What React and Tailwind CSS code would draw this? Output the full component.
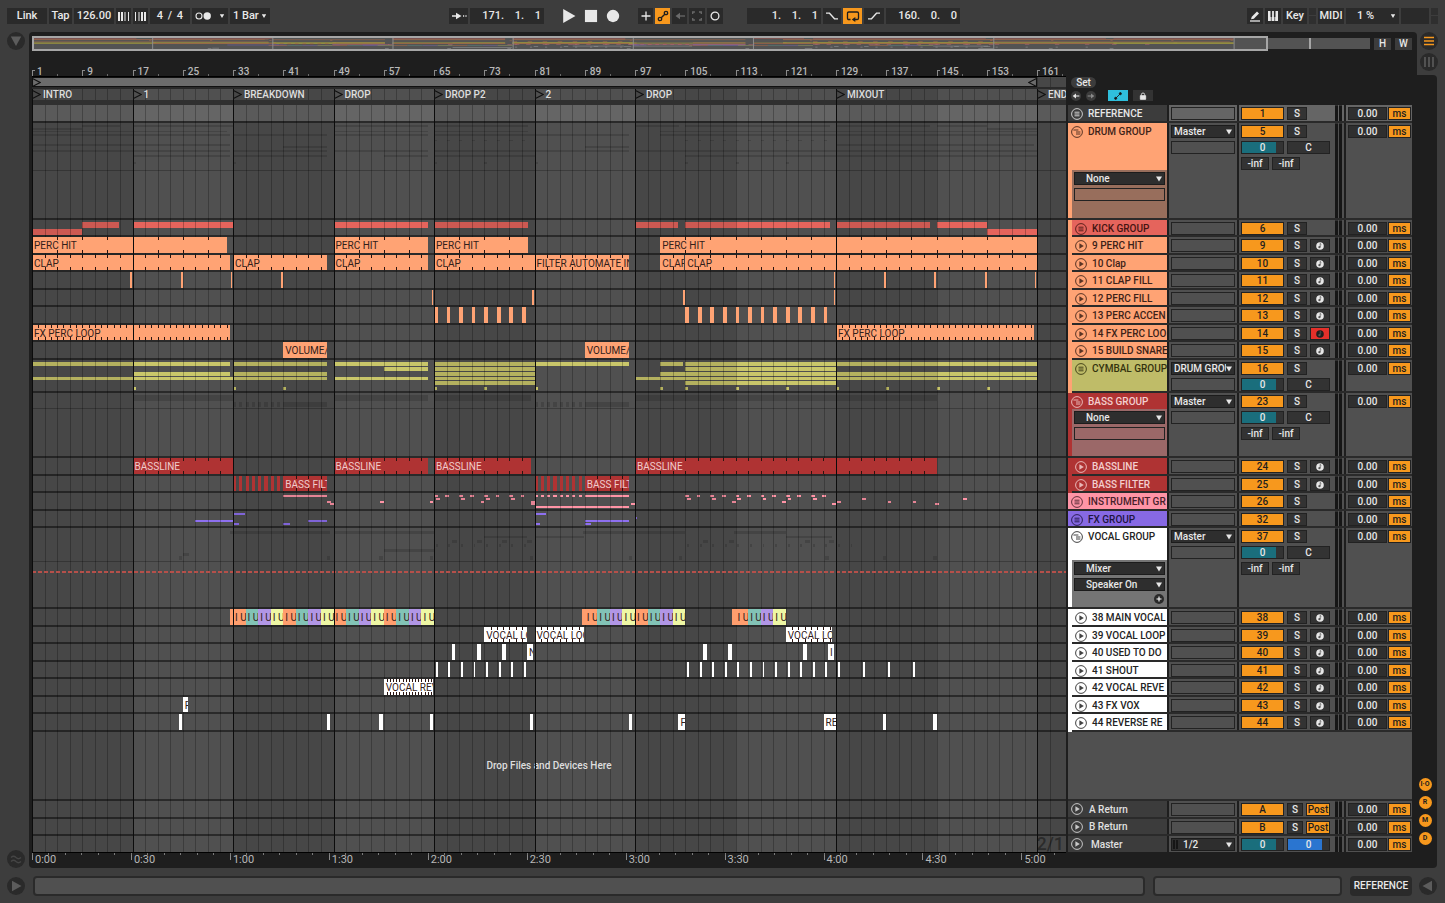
import React from 'react';

const TOTAL_BARS = 164.6;
const left = (bar) => `${((bar - 1) / TOTAL_BARS) * 100}%`;
const width = (bars) => `${(bars / TOTAL_BARS) * 100}%`;

const range = (start, count, step) => Array.from({ length: count }, (_, i) => start + i * step);

// [start bar, end bar, label, colour override]
const marks = (starts, len) => starts.map((s) => [s, s + len]);
// [start bar, end bar, top, height]
const mini = (top, h, spans) => spans.map(([s, e]) => [s, e, top, h]);

const VOCAL_COLORS = ['bg-[#ff9e6e]', 'bg-[#82c3b6]', 'bg-[#b196e6]', 'bg-[#eef7a4]'];
const phrase = (start, count) => [
  [start - 0.5, start, '', VOCAL_COLORS[0]],
  ...range(start, count, 2).map((s, i) => [s, s + 2, 'I U', VOCAL_COLORS[i % 4]]),
];

const ORANGE = 'bg-[#ffa374]';
const RED = 'bg-[#e5645c]';
const YELLOW = 'bg-[#bfbc68]';
const CRIMSON = 'bg-[#af3333]';
const PINK = 'bg-[#ff94a6]';
const PURPLE = 'bg-[#8769e4]';
const GHOST = 'bg-black/15';

const TRACKS = [
  { n: '1', name: 'REFERENCE', kind: 'group', h: 'h-[18px]', bg: 'bg-[#3c3c3c]', fg: 'text-[#e8e8e8]', selected: true },
  {
    n: '5', name: 'DRUM GROUP', kind: 'fold', h: 'h-[97px]', bg: ORANGE, fg: 'text-[#3d2218]', out: 'Master', size: 3,
    body: { h: 'h-[48px]', bg: 'bg-[#986e5c]', choices: ['None', ''] }, rule: 'top-[47px]',
    miniBg: GHOST,
    minis: [
      ...mini(2, 2, [[9, 15], [17, 33], [49, 64], [65, 80], [97, 104], [105, 128], [129, 144], [145, 153]]),
      ...mini(5, 2, [[1, 9], [153, 161]]),
      ...mini(8, 1, [[1, 32], [49, 64], [65, 80], [101, 161]]),
      ...mini(11, 2, [[1, 32.5], [33, 48], [49, 64], [65, 96], [101, 161]]),
      ...mini(17, 1, marks([...range(65, 8, 2), ...range(105, 12, 2)], 0.5)),
      ...mini(21, 2, [[1, 32.5], [129, 160.5]]),
      ...mini(23, 2, [[41, 48], [89, 96]]),
      ...mini(27, 2, [[1, 32.5], [33, 48], [49, 64], [65, 96], [97, 161]]),
      ...mini(32, 2, [[17, 32.5], [33, 48], [57, 64], [65, 81], [105, 161]]),
      ...mini(39, 2, marks([17, 33, 65, 73, 81, 105, 113, 121], 0.5)),
    ],
  },
  {
    n: '6', name: 'KICK GROUP', kind: 'group', h: 'h-[17px]', bg: RED, fg: 'text-[#451512]', strip: ORANGE, miniBg: RED,
    minis: [
      ...mini(2, 6, [[9, 14.9], [17, 33], [49, 64], [65, 80], [97, 103.8], [105, 128], [129, 144], [145, 153]]),
      ...mini(9, 6, [[1, 9], [153, 161]]),
    ],
  },
  { n: '9', name: '9 PERC HIT', kind: 'audio', h: 'h-[18px]', bg: ORANGE, fg: 'text-[#3d2218]', strip: ORANGE, tick: 4,
    clips: [[1, 32, 'PERC HIT'], [49, 64, 'PERC HIT'], [65, 80, 'PERC HIT'], [101, 161, 'PERC HIT']] },
  { n: '10', name: '10 Clap', kind: 'audio', h: 'h-[17px]', bg: ORANGE, fg: 'text-[#3d2218]', strip: ORANGE, tick: 2,
    clips: [[1, 32.5, 'CLAP'], [33, 48, 'CLAP'], [49, 64, 'CLAP'], [65, 81, 'CLAP'], [81, 96, 'FILTER AUTOMATE IN'], [101, 104.8, 'CLAP'], [105, 161, 'CLAP']] },
  { n: '11', name: '11 CLAP FILL', kind: 'audio', h: 'h-[18px]', bg: ORANGE, fg: 'text-[#3d2218]', strip: ORANGE,
    clips: marks([16.6, 24.7, 32.6, 40.7, 128.6, 136.7, 144.6, 152.7, 160.6], 0.3) },
  { n: '12', name: '12 PERC FILL', kind: 'audio', h: 'h-[17px]', bg: ORANGE, fg: 'text-[#3d2218]', strip: ORANGE,
    clips: marks([64.6, 80.6, 104.6, 128.6], 0.3) },
  { n: '13', name: '13 PERC ACCEN', kind: 'audio', h: 'h-[18px]', bg: ORANGE, fg: 'text-[#3d2218]', strip: ORANGE,
    clips: marks([...range(65, 8, 2), ...range(105, 12, 2)], 0.6) },
  { n: '14', name: '14 FX PERC LOO', kind: 'audio', h: 'h-[17px]', bg: ORANGE, fg: 'text-[#3d2218]', strip: ORANGE, tick: 1, armed: true,
    clips: [[1, 32.5, 'FX PERC LOOP'], [129, 160.5, 'FX PERC LOOP']] },
  { n: '15', name: '15 BUILD SNARE', kind: 'audio', h: 'h-[18px]', bg: ORANGE, fg: 'text-[#3d2218]', strip: ORANGE,
    clips: [[41, 48, 'VOLUME/'], [89, 96, 'VOLUME/']] },
  {
    n: '16', name: 'CYMBAL GROUP', kind: 'group', h: 'h-[33px]', bg: YELLOW, fg: 'text-[#34330f]', strip: ORANGE, out: 'DRUM GROUP', size: 2, miniBg: 'bg-[#c9c66a]',
    minis: [
      ...mini(2, 4, [[1, 32.5], [33, 48], [49, 64], [65, 96], [101, 104.7], [105, 161]]),
      ...mini(7, 4, [[57, 64], [65, 81], [105, 129]]),
      ...mini(12, 4, [[17, 32.5], [33, 48], [65, 81], [101, 161]]),
      ...mini(17, 3, [[1, 48], [49, 64], [65, 81], [97, 161]]),
      ...mini(21, 4, [[65, 81], [105, 129]]),
      ...mini(27, 3, marks([17, 33, 41, 65, 73, 81, 101, 105, 113, 121, 129, 137, 145, 153], 0.5)),
    ],
  },
  {
    n: '23', name: 'BASS GROUP', kind: 'fold', h: 'h-[65px]', bg: CRIMSON, fg: 'text-[#f3cfcf]', out: 'Master', size: 3,
    body: { h: 'h-[47px]', bg: 'bg-[#9b6868]', choices: ['None', ''] }, rule: 'top-[15px]', miniBg: GHOST,
    minis: [
      ...mini(2, 6, [[17, 33], [49, 64], [65, 80.5], [97, 145]]),
      ...mini(9, 5, [...marks([...range(33, 8, 1), ...range(81, 8, 1)], 0.5), [41, 48], [89, 96]]),
    ],
  },
  { n: '24', name: 'BASSLINE', kind: 'audio', h: 'h-[18px]', bg: CRIMSON, fg: 'text-[#f3cfcf]', strip: CRIMSON, tick: 2,
    clips: [[17, 33, 'BASSLINE'], [49, 64, 'BASSLINE'], [65, 80.5, 'BASSLINE'], [97, 145, 'BASSLINE']] },
  { n: '25', name: 'BASS FILTER', kind: 'audio', h: 'h-[17px]', bg: CRIMSON, fg: 'text-[#f3cfcf]', strip: CRIMSON, tick: 2,
    clips: [...marks(range(33, 8, 1), 0.5), [41, 48, 'BASS FILT'], ...marks(range(81, 8, 1), 0.5), [89, 96, 'BASS FILT']] },
  {
    n: '26', name: 'INSTRUMENT GR', kind: 'group', h: 'h-[18px]', bg: PINK, fg: 'text-[#47202a]', miniBg: PINK,
    minis: [
      ...mini(2, 2, [[41, 48], [89, 96], ...marks(range(81, 8, 1), 0.5), ...marks([...range(65, 4, 4), ...range(66.8, 4, 4), ...range(105, 6, 4), ...range(106.8, 6, 4)], 0.6)]),
      ...mini(5, 2, marks([...range(65.3, 4, 4), ...range(105.3, 6, 4), 133.2, 149.2], 0.6)),
      ...mini(8, 2, marks([48, 56.4, 64.3, 72.4, 80.4, 112.4, 120.4, 129.2, 137.2, 141.2], 0.6)),
      ...mini(10, 2, marks([48.4, 80.4, 96.4, 128.4, 144.8], 0.6)),
      ...mini(13, 2, [[81, 96]]),
    ],
  },
  {
    n: '32', name: 'FX GROUP', kind: 'group', h: 'h-[17px]', bg: PURPLE, fg: 'text-[#1d1440]', miniBg: 'bg-[#8e70f0]',
    minis: [
      ...mini(2, 2, [[33, 34.9], [81, 82.8]]),
      ...mini(6, 2, [[97, 97.3]]),
      ...mini(9, 2, [[27, 33], [45, 48], [89, 96]]),
      ...mini(12, 2, [[33, 33.9], [41, 42], [81, 81.8], [89, 90]]),
    ],
  },
  {
    n: '37', name: 'VOCAL GROUP', kind: 'fold', h: 'h-[81px]', bg: 'bg-white', fg: 'text-[#222222]', out: 'Master', size: 3,
    body: { h: 'h-[47px]', bg: 'bg-[#757575]', choices: ['Mixer', 'Speaker On'], add: true }, rule: 'top-[33px]', miniBg: GHOST, dashed: true,
    minis: [
      ...mini(3, 3, [[32.5, 48.5], [49, 65], [88.7, 105], [112.7, 121]]),
      ...mini(8, 2, [[73, 79.8], [81, 88.8], [121, 128.4]]),
      ...mini(12, 3, marks([67.8, 71.8, 75.8, 79.8, 107.8, 112, 124, 127.8], 0.8)),
      ...mini(16, 3, marks([...range(65.3, 8, 2), ...range(105.3, 14, 2)], 0.3)),
      ...mini(21, 3, [[57, 65]]),
      ...mini(25, 3, [[25, 26]]),
      ...mini(28, 4, marks([24.4, 48, 56.3, 64.3, 80.2, 96, 104, 127.3, 136.4, 144.5], 0.5)),
    ],
  },
  { n: '38', name: '38 MAIN VOCAL', kind: 'audio', h: 'h-[18px]', bg: 'bg-white', fg: 'text-[#222222]', strip: 'bg-white',
    clips: [...phrase(33, 16), ...phrase(89, 8), ...phrase(113, 4)] },
  { n: '39', name: '39 VOCAL LOOP', kind: 'audio', h: 'h-[17px]', bg: 'bg-white', fg: 'text-[#222222]', strip: 'bg-white', tick: 1,
    clips: [[73, 79.8, 'VOCAL LO'], [81, 88.9, 'VOCAL LOO'], [121, 128.3, 'VOCAL LO']] },
  { n: '40', name: '40 USED TO DO', kind: 'audio', h: 'h-[18px]', bg: 'bg-white', fg: 'text-[#222222]', strip: 'bg-white',
    clips: [...marks([67.8, 71.8, 75.8, 107.8, 111.8, 123.8], 0.6), [79.8, 80.8, 'N'], [127.7, 128.6, 'I']] },
  { n: '41', name: '41 SHOUT', kind: 'audio', h: 'h-[17px]', bg: 'bg-white', fg: 'text-[#222222]', strip: 'bg-white',
    clips: marks([...range(65.3, 8, 2), ...range(105.3, 12, 2), 129.3, 133.3, 137.3, 141.3], 0.3) },
  { n: '42', name: '42 VOCAL REVE', kind: 'audio', h: 'h-[18px]', bg: 'bg-white', fg: 'text-[#222222]', strip: 'bg-white', tick: 0.5,
    clips: [[57, 64.9, 'VOCAL REV']] },
  { n: '43', name: '43 FX VOX', kind: 'audio', h: 'h-[17px]', bg: 'bg-white', fg: 'text-[#222222]', strip: 'bg-white',
    clips: [[25, 25.9, 'F']] },
  { n: '44', name: '44 REVERSE RE', kind: 'audio', h: 'h-[18px]', bg: 'bg-white', fg: 'text-[#222222]', strip: 'bg-white',
    clips: [...marks([24.4, 48, 56.3, 64.3, 80.2, 96, 136.4, 144.5], 0.5), [103.9, 104.9, 'F'], [127, 129, 'RE']] },
];

const LOCATORS = [[1, 'INTRO'], [17, '1'], [33, 'BREAKDOWN'], [49, 'DROP'], [65, 'DROP P2'], [81, '2'], [97, 'DROP'], [129, 'MIXOUT'], [161, 'END']];

/* ---------- small shared controls ---------- */

function TopButton({ className = '', label, children, active, dim }) {
  return (
    <button
      aria-label={label}
      className={`flex h-4 shrink-0 items-center justify-center ${active ? 'bg-[#f7981d] text-[#1e1e1e]' : dim ? 'bg-[#2a2a2a] text-[#6a6a6a]' : 'bg-[#2a2a2a] text-[#e8e8e8]'} ${className}`}
    >
      {children}
    </button>
  );
}

function Position({ label, values }) {
  return (
    <div className="flex h-4 w-[74px] items-center justify-end bg-[#2a2a2a] pr-[3px]">
      {values.map((v, i) => (
        <React.Fragment key={i}>
          <input
            aria-label={`${label} ${['bars', 'beats', 'sixteenths'][i]}`}
            defaultValue={v}
            className={`${i ? 'w-4' : 'w-6'} min-w-0 bg-transparent text-right text-[11px] leading-4 font-medium text-[#e8e8e8] outline-none`}
          />
          {i < 2 && <span className="w-1 text-[11px] leading-4">.</span>}
        </React.Fragment>
      ))}
    </div>
  );
}

function Caret({ className = '' }) {
  return (
    <svg viewBox="0 0 6 6" className={`pointer-events-none h-[6px] w-[6px] ${className}`} fill="currentColor" aria-hidden="true">
      <path d="M0 .5h6L3 5.5z" />
    </svg>
  );
}

function Choice({ label, value, indent, meter }) {
  return (
    <div className="relative h-[13px] border border-[#1c1c1c] bg-[#2e2e2e] text-[#e8e8e8]">
      {meter && (
        <svg viewBox="0 0 5 9" className="absolute top-px left-px h-[9px] w-[5px]" aria-hidden="true">
          <path d="M0 0h2v9H0zM3 0h2v9H3z" fill="#161616" />
        </svg>
      )}
      <select
        aria-label={label}
        defaultValue={value}
        className={`relative block h-[11px] w-full appearance-none bg-transparent pr-2 text-[10px] leading-[11px] font-medium outline-none ${indent ? 'pl-[11px]' : 'pl-[2px]'}`}
      >
        <option>{value}</option>
      </select>
      <Caret className="absolute top-[3px] right-[2px]" />
    </div>
  );
}

function Cell({ className = '', tone = 'dark', children, label, pressed }) {
  const tones = {
    dark: 'bg-[#333333] text-[#e8e8e8]',
    orange: 'bg-[#f7981d] text-[#1e1e1e]',
    red: 'bg-[#e3302a] text-[#1e1e1e]',
  };
  return (
    <button aria-label={label} aria-pressed={pressed} className={`flex h-[13px] shrink-0 items-center justify-center overflow-hidden border border-[#222222] text-[10px] leading-[11px] font-medium ${tones[tone]} ${className}`}>
      {children}
    </button>
  );
}

function Level({ label, fill = 'bg-[#1a6e7c]' }) {
  return (
    <button aria-label={label} className="relative flex h-[13px] w-[43px] shrink-0 items-center border border-[#222222] bg-[#333333] text-[10px] leading-[11px] font-medium text-[#e8e8e8]">
      <span className={`h-full w-5/6 ${fill}`} />
      <span className="absolute inset-x-0 text-center">0</span>
    </button>
  );
}

function TrackIcon({ kind }) {
  return (
    <svg viewBox="0 0 12 12" className="h-3 w-3 shrink-0" fill="none" stroke="currentColor" opacity="0.85" aria-hidden="true">
      <circle cx="6" cy="6" r="5.4" strokeWidth="1" />
      {kind === 'audio' && <path d="M4.4 3.3v5.4L8.8 6z" fill="currentColor" stroke="none" />}
      {kind === 'group' && <path d="M3.5 4.2h5M3.5 6h5M3.5 7.8h5" strokeWidth="1" />}
      {kind === 'fold' && <path d="M2.4 4h5M5 6h4.400M5 8h4.400" strokeWidth="1" />}
    </svg>
  );
}

function RecordIcon() {
  return (
    <svg viewBox="0 0 8 8" className="h-2 w-2" aria-hidden="true">
      <circle cx="4" cy="4" r="3.8" fill="currentColor" />
      <path d="M4.2 1.4v3.7M4.2 1.5l1.2 1.2" stroke="#555555" strokeWidth="0.8" fill="none" />
      <circle cx="3.4" cy="5.2" r="1.1" fill="#555555" />
    </svg>
  );
}

/* ---------- transport bar ---------- */

function Bars({ flip }) {
  return (
    <svg viewBox="0 0 11 9" className={`h-[9px] w-[11px] ${flip ? '-scale-x-100' : ''}`} fill="currentColor" aria-hidden="true">
      <path d="M0 0h2v9H0zM3 0h2v9H3zM6.5 0h1v9h-1zM10 0h1v9h-1z" />
    </svg>
  );
}

function Icon({ children, className = 'h-3 w-3', box = '0 0 12 12' }) {
  return (
    <svg viewBox={box} className={className} fill="none" stroke="currentColor" strokeWidth="1.3" aria-hidden="true">
      {children}
    </svg>
  );
}

function Transport() {
  return (
    <header className="flex h-8 items-center pr-[7px] pl-[7px] text-[11px] font-medium">
      <div className="flex gap-[2px]">
        <TopButton className="w-10">Link</TopButton>
        <TopButton className="w-[23px]">Tap</TopButton>
        <input aria-label="Tempo" defaultValue="126.00" className="h-4 w-10 bg-[#2a2a2a] text-center outline-none" />
        <TopButton className="w-[15px]" label="Nudge down"><Bars /></TopButton>
        <TopButton className="w-[15px]" label="Nudge up"><Bars flip /></TopButton>
        <div className="flex h-4 w-10 items-center justify-center bg-[#2a2a2a]">
          <input aria-label="Beats per bar" defaultValue="4" className="w-3 bg-transparent text-center outline-none" />
          <span className="w-2 text-center">/</span>
          <input aria-label="Beat unit" defaultValue="4" className="w-3 bg-transparent text-center outline-none" />
        </div>
        <TopButton className="w-[36px] gap-2" label="Metronome">
          <svg viewBox="0 0 16 8" className="h-2 w-4" aria-hidden="true">
            <circle cx="4" cy="4" r="3" fill="none" stroke="currentColor" strokeWidth="1.1" />
            <circle cx="12.2" cy="4" r="3.7" fill="currentColor" />
          </svg>
          <Caret className="scale-75" />
        </TopButton>
        <div className="relative h-4 w-10 bg-[#2a2a2a]">
          <select aria-label="Quantization" defaultValue="1 Bar" className="h-4 w-full appearance-none bg-transparent pl-[3px] outline-none">
            <option>1 Bar</option>
          </select>
          <Caret className="absolute top-[5px] right-[3px] scale-75" />
        </div>
      </div>

      <div className="ml-[179px] flex items-center gap-[2px]">
        <TopButton className="w-[19px]" label="Follow">
          <Icon box="0 0 16 8" className="h-2 w-4">
            <path d="M1 4h4M12 4h1.2M14.4 4h1.2" />
            <path d="M5 .8v6.4L10.5 4z" fill="currentColor" stroke="none" />
          </Icon>
        </TopButton>
        <Position label="Song position" values={['171', '1', '1']} />
        <div className="flex w-[90px] items-center justify-center gap-2">
          <button aria-label="Play"><Icon className="h-[14px] w-[14px]"><path d="M1 0v12L11.500 6z" fill="currentColor" stroke="none" /></Icon></button>
          <button aria-label="Stop"><Icon className="h-[14px] w-[14px]"><path d="M.8.8h10.400v10.400H.8z" fill="currentColor" stroke="none" /></Icon></button>
          <button aria-label="Record"><Icon className="h-[14px] w-[14px]"><circle cx="6" cy="6" r="5.3" fill="currentColor" stroke="none" /></Icon></button>
        </div>
        <TopButton className="w-[15px]" label="Overdub"><Icon><path d="M6 1.500v9M1.500 6h9" /></Icon></TopButton>
        <TopButton className="w-[15px]" label="Automation arm" active>
          <Icon><circle cx="3" cy="9" r="1.7" /><circle cx="9" cy="3" r="1.7" /><path d="M4.2 7.8l3.6-3.6" /></Icon>
        </TopButton>
        <TopButton className="w-[15px]" label="Re-enable automation" dim><Icon><path d="M5.5 6H11" /><path d="M6 2.8v6.4L1.5 6z" fill="currentColor" stroke="none" /></Icon></TopButton>
        <TopButton className="w-4" label="Capture" dim><Icon><path d="M1.7 4V2h2.2M8 2h2.3v2M10.3 8v2H8M3.9 10H1.7V8" /></Icon></TopButton>
        <TopButton className="w-4" label="Session record"><Icon><circle cx="6" cy="6" r="3.900" /></Icon></TopButton>
        <div className="w-5" />
        <Position label="Loop start" values={['1', '1', '1']} />
        <TopButton className="w-[18px]" label="Punch in"><Icon className="h-3 w-[14px]" box="0 0 14 12"><path d="M1 3.2h3.5l5 5.6H13" /></Icon></TopButton>
        <TopButton className="w-[19px]" label="Loop" active>
          <Icon className="h-3 w-[14px]" box="0 0 14 12"><path d="M4.5 9.5H2.8Q1.5 9.5 1.5 8.200V3.3Q1.500 2 2.8 2h8.400q1.300 0 1.300 1.300v4.900q0 1.300-1.300 1.300H9" /><path d="M9.300 7v5L5.800 9.500z" fill="currentColor" stroke="none" /></Icon>
        </TopButton>
        <TopButton className="w-5" label="Punch out"><Icon className="h-3 w-[14px]" box="0 0 14 12"><path d="M1 8.800h3.500l5-5.600H13" /></Icon></TopButton>
        <Position label="Loop length" values={['160', '0', '0']} />
      </div>

      <div className="ml-auto flex gap-[2px]">
        <TopButton className="w-4" label="Draw mode">
          <Icon><path d="M1 11h10" /><path d="M2 9.300l.8-2.600L8 1.500l2 2-5.200 5.200z" fill="currentColor" stroke="none" /></Icon>
        </TopButton>
        <TopButton className="w-4" label="Computer keyboard">
          <Icon><path d="M1 1h10v10H1z" fill="currentColor" stroke="none" /><path d="M4.300 1v6M7.700 1v6" stroke="#2a2a2a" strokeWidth="1.600" /><path d="M4.300 7v4M7.700 7v4" stroke="#2a2a2a" strokeWidth=".7" /></Icon>
        </TopButton>
        <TopButton className="w-6">Key</TopButton>
        <div className="flex flex-col gap-px"><i className="h-[7px] w-[7px] bg-[#2f2f2f]" /><i className="h-2 w-[7px] bg-[#2f2f2f]" /></div>
        <TopButton className="w-[26px]">MIDI</TopButton>
        <TopButton className="w-[53px] gap-4 pl-2" label="CPU load 1 %">1 % <Caret className="scale-75" /></TopButton>
        <div className="h-4 w-7 bg-[#2a2a2a]" />
        <div className="flex flex-col gap-px"><i className="h-[7px] w-[7px] bg-[#2f2f2f]" /><i className="h-2 w-[7px] bg-[#2f2f2f]" /></div>
      </div>
    </header>
  );
}

/* ---------- overview ---------- */

const OVERVIEW_FILL = {
  [ORANGE]: '#b9704c', [CRIMSON]: '#b04a4a', 'bg-white': '#a9a9a9', [PINK]: '#c46a78',
  'bg-[#8e70f0]': '#7560c0', [RED]: '#b8564f', 'bg-[#c9c66a]': '#a9a13c',
  [VOCAL_COLORS[0]]: '#b9704c', [VOCAL_COLORS[1]]: '#5d8f86', [VOCAL_COLORS[2]]: '#7f6aad', [VOCAL_COLORS[3]]: '#a2a866',
};

function Overview() {
  const rows = TRACKS.filter((t) => t.kind !== 'fold' && !t.selected);
  return (
    <div className="flex h-[15px] items-center">
      <div className="relative h-[15px] flex-1">
        <svg viewBox="0 0 1338 15" preserveAspectRatio="none" className="block h-full w-full" aria-hidden="true">
          <rect x="1" y="2" width="1337" height="11" fill="#535353" />
          <g opacity="0.8">
            {rows.map((t, r) => [
              ...(t.clips || []).map(([s, e, , c], i) => (
                <rect key={`c${r}-${i}`} x={(s - 1) * 7.51} y={2.5 + r * 0.52} width={(e - s) * 7.51} height="0.52" fill={OVERVIEW_FILL[c || t.bg]} />
              )),
              ...(t.minis || []).map(([s, e], i) => (
                <rect key={`m${r}-${i}`} x={(s - 1) * 7.51} y={2.5 + r * 0.52} width={(e - s) * 7.51} height={t.n === '16' ? 0.9 : 0.52} fill={OVERVIEW_FILL[t.miniBg]} />
              )),
            ])}
          </g>
          {LOCATORS.slice(1).map(([b]) => <rect key={b} x={(b - 1) * 7.51} y="2" width="1" height="11" fill="#8c8c8c" />)}
          <rect x="1277" y="2" width="2" height="11" fill="#a6a6a6" />
          <rect x="1" y="1" width="1234" height="13" fill="none" stroke="#a6a6a6" strokeWidth="2" />
        </svg>
      </div>
      <div className="ml-1 flex gap-1 text-[10px] font-medium">
        <button className="h-3 w-[17px] bg-[#3c3c3c] leading-3">H</button>
        <button className="h-3 w-[17px] bg-[#3c3c3c] leading-3">W</button>
      </div>
    </div>
  );
}

/* ---------- timeline ---------- */

function Grid() {
  return (
    <div className="pointer-events-none absolute inset-0 z-10 overflow-hidden">
      {range(1, 6, 32).map((b) => (
        <div key={b} className="absolute inset-y-0 bg-black/10" style={{ left: left(b), width: width(16) }} />
      ))}
      {range(3, 81, 2).map((b) => (
        <div key={b} className="absolute inset-y-0 w-px bg-black/25" style={{ left: left(b) }} />
      ))}
    </div>
  );
}

function LocatorLines() {
  return (
    <div className="pointer-events-none absolute inset-0 z-30">
      {LOCATORS.map(([b]) => (
        <div key={b} className="absolute inset-y-0 w-px bg-[#0c0c0c]" style={{ left: left(b) }} />
      ))}
    </div>
  );
}

function Ruler() {
  return (
    <div className="relative h-6 border-b border-black text-[10px] font-medium text-[#b8b8b8]">
      {range(1, 21, 8).map((b) => (
        <div key={b} className="absolute bottom-0 h-[6px] border-l border-[#8a8a8a]" style={{ left: left(b) }}>
          <i className="block h-px w-[2px] bg-[#8a8a8a]" />
          <span className="absolute bottom-0 left-1 leading-[9px]">{b}</span>
        </div>
      ))}
      {range(5, 21, 8).map((b) => (
        <i key={b} className="absolute bottom-0 h-[2px] w-px bg-[#6a6a6a]" style={{ left: left(b) }} />
      ))}
    </div>
  );
}

function Flag({ className = '', flip }) {
  return (
    <svg viewBox="0 0 9 9" className={`h-[9px] w-[9px] shrink-0 ${className}`} fill="none" stroke="#111111" strokeWidth="1.100" aria-hidden="true">
      <path d={flip ? 'M8.500.5L.8 4.500l7.700 4z' : 'M.5.5l7.700 4-7.700 4z'} />
    </svg>
  );
}

function Locators() {
  return (
    <>
      <div className="relative h-[10px] bg-[#505050]">
        <Grid />
        <div className="absolute inset-y-0 left-0 z-20 flex items-center justify-between border-y border-[#111111] bg-[#6c6c6c]" style={{ width: width(160) }}>
          <Flag /><Flag flip />
        </div>
      </div>
      <div className="relative h-[13px] overflow-hidden border-t-2 border-[#2a2a2a] bg-[#505050]">
        <Grid />
        <LocatorLines />
        {LOCATORS.map(([b, name]) => (
          <button key={b} className="absolute top-0 z-30 flex h-[11px] items-center gap-[2px] text-[10px] leading-[11px] font-medium whitespace-nowrap text-[#dedede]" style={{ left: left(b) }}>
            <Flag /> {name}
          </button>
        ))}
      </div>
      <div className="relative h-[5px] bg-[#303030]"><LocatorLines /></div>
    </>
  );
}

function Clip({ track, clip }) {
  const [s, e, label, color] = clip;
  const crimson = track.bg === CRIMSON;
  const ticks = [];
  if (track.tick && label) for (let b = s + track.tick; b < e - 0.1; b += track.tick) ticks.push(b);
  return (
    <div
      className={`absolute top-0 bottom-0 z-20 overflow-hidden text-[10px] leading-[17px] whitespace-nowrap ${crimson ? 'text-[#f0cccc]' : 'text-[#33201a]'} ${color || track.bg}`}
      style={{ left: left(s), width: width(e - s) }}
    >
      {ticks.map((b) => (
        <i key={b} className="absolute inset-y-0 w-px border-y-[3px] border-[#2a1410]" style={{ left: `${((b - s) / (e - s)) * 100}%` }} />
      ))}
      {label && <span className="relative pl-[2px]">{label}</span>}
    </div>
  );
}

function Lane({ track }) {
  return (
    <div className={`relative overflow-hidden border-b-2 border-[#2a2a2a] ${track.h} ${track.selected ? 'bg-[#656565]' : 'bg-[#505050]'}`}>
      {track.rule && <div className={`absolute inset-x-0 h-px bg-black/25 ${track.rule}`} />}
      {(track.minis || []).map(([s, e, top, h], i) => (
        <div key={i} className={`absolute ${track.miniBg}`} style={{ left: left(s), width: width(e - s), top, height: h }} />
      ))}
      {track.dashed && (
        <div className="absolute inset-x-0 top-[43px] z-20 h-[2px] bg-[repeating-linear-gradient(90deg,#b5504a_0px,#b5504a_4px,transparent_4px,transparent_6px)]" />
      )}
      {(track.clips || []).map((c, i) => <Clip key={i} track={track} clip={c} />)}
    </div>
  );
}

function TimeRuler() {
  const fmt = (k) => `${Math.floor(k / 2)}:${k % 2 ? '30' : '00'}`;
  return (
    <div className="relative h-[15px] overflow-hidden border-t border-black text-[11px] text-[#b8b8b8]">
      {range(0, 11, 1).map((k) => (
        <div key={k} className="absolute top-0 h-[7px] border-l border-[#8a8a8a]" style={{ left: left(1 + k * 15.75) }}>
          <span className="absolute top-0 left-[2px] leading-[13px]">{fmt(k)}</span>
        </div>
      ))}
      {range(0, 63, 1).map((k) => (
        <i key={k} className="absolute top-0 h-[2px] w-px bg-[#7a7a7a]" style={{ left: left(1 + k * 2.625) }} />
      ))}
    </div>
  );
}

function Timeline() {
  return (
    <section className="min-w-0 flex-1 overflow-hidden" aria-label="Arrangement">
      <Ruler />
      <Locators />
      <div className="relative">
        <Grid />
        <LocatorLines />
        {TRACKS.map((t) => <Lane key={t.n} track={t} />)}
        <div className="flex h-[69px] items-center justify-center border-b-2 border-[#2a2a2a] bg-[#505050] text-[10px] font-medium text-[#dedede]">
          <span className="relative z-20">Drop Files and Devices Here</span>
        </div>
        <div className="h-[18px] border-b-2 border-[#2a2a2a] bg-[#505050]" />
        <div className="h-[17px] border-b-2 border-[#2a2a2a] bg-[#505050]" />
        <div className="flex h-4 items-center justify-end bg-[#505050] pr-[2px] text-lg leading-4 font-medium text-[#303030]">2/1</div>
      </div>
      <TimeRuler />
    </section>
  );
}

/* ---------- track headers ---------- */

const EmptyBox = ({ className = '' }) => <div className={`h-[13px] border border-[#222222] ${className}`} />;

function Meter() {
  return (
    <div className="mr-[2px] ml-auto flex w-[7px] gap-px self-stretch">
      <i className="w-[3px] border-t border-[#2f2f2f] bg-[#161616]" />
      <i className="w-[3px] border-t border-[#2f2f2f] bg-[#161616]" />
    </div>
  );
}

function Delay({ name, face }) {
  return (
    <div className={`flex w-[66px] shrink-0 gap-px pt-[2px] pl-[2px] ${face}`}>
      <input aria-label={`${name} delay`} defaultValue="0.00" className="h-[13px] w-[39px] border border-[#222222] bg-[#2f2f2f] text-center text-[10px] font-medium text-[#e8e8e8] outline-none" />
      <Cell tone="orange" className="w-[23px]" label={`${name} delay unit`}>ms</Cell>
    </div>
  );
}

function TrackName({ t }) {
  return (
    <div className="flex w-[99px] shrink-0">
      {t.strip && <div className={`-mb-[2px] w-1 shrink-0 ${t.strip}`} />}
      <div className={`flex min-w-0 flex-1 flex-col ${t.bg}`}>
        <div className={`flex items-center gap-[5px] overflow-hidden pt-[2px] pl-[3px] text-[10px] leading-[13px] font-medium whitespace-nowrap ${t.fg}`}>
          <TrackIcon kind={t.kind} />
          <span>{t.name}</span>
        </div>
        {t.body && (
          <div className={`mt-auto ml-1 flex flex-col gap-[3px] px-[2px] pt-[2px] ${t.body.h} ${t.body.bg}`}>
            {t.body.choices.map((c, i) => (c ? <Choice key={i} label={`${t.name} automation ${i + 1}`} value={c} indent /> : <EmptyBox key={i} />))}
            {t.body.add && (
              <button aria-label="Add automation lane" className="mr-px self-end rounded-full bg-[#2a2a2a] text-white">
                <Icon className="h-[10px] w-[10px]"><path d="M6 3v6M3 6h6" /></Icon>
              </button>
            )}
          </div>
        )}
      </div>
    </div>
  );
}

function TrackHeader({ t }) {
  const face = t.selected ? 'bg-[#656565]' : 'bg-[#505050]';
  return (
    <div className={`flex gap-[2px] border-b-2 border-[#2a2a2a] ${t.h}`}>
      <TrackName t={t} />
      <div className={`flex w-[68px] shrink-0 flex-col gap-[3px] px-[2px] pt-[2px] ${face}`}>
        {t.out ? <Choice label={`${t.name} output`} value={t.out} /> : <EmptyBox />}
        {t.size && <EmptyBox />}
      </div>
      <div className={`flex w-[105px] shrink-0 pl-[2px] ${face}`}>
        <div className="flex flex-col gap-[3px] pt-[2px]">
          <div className="flex gap-[3px]">
            <Cell tone="orange" className="w-[43px]" label={`${t.name} active`} pressed>{t.n}</Cell>
            <Cell className="w-5" label={`Solo ${t.name}`}>S</Cell>
            {t.kind === 'audio' && <Cell tone={t.armed ? 'red' : 'dark'} className="w-5" label={`Arm ${t.name}`}><RecordIcon /></Cell>}
          </div>
          {t.size > 1 && <div className="flex gap-[3px]"><Level label={`${t.name} volume`} /><Cell className="w-[43px]">C</Cell></div>}
          {t.size > 2 && <div className="flex gap-[3px]"><Cell className="w-7">-inf</Cell><Cell className="w-7">-inf</Cell></div>}
        </div>
        <Meter />
      </div>
      <Delay name={t.name} face={face} />
    </div>
  );
}

function ReturnHeader({ name, letter, h, master }) {
  return (
    <div className={`flex gap-[2px] border-[#2a2a2a] ${h} ${master ? '' : 'border-b-2'}`}>
      <div className="flex w-[99px] shrink-0 items-center gap-[6px] bg-[#3c3c3c] pl-[3px] text-[10px] font-medium text-[#e0e0e0]">
        <TrackIcon kind="audio" />
        <span className={master ? 'pl-[2px]' : ''}>{name}</span>
      </div>
      <div className="w-[68px] shrink-0 bg-[#505050] px-[2px] pt-[2px]">
        {master ? <Choice label="Master output" value="1/2" indent meter /> : <EmptyBox />}
      </div>
      <div className="flex w-[105px] shrink-0 bg-[#505050] pl-[2px]">
        <div className="flex gap-[3px] pt-[2px]">
          {master ? (
            <><Level label="Master volume" /><Level label="Cue volume" fill="bg-[#2a75d0]" /></>
          ) : (
            <>
              <Cell tone="orange" className="w-[43px]" pressed>{letter}</Cell>
              <Cell className="w-4">S</Cell>
              <Cell tone="orange" className="w-6">Post</Cell>
            </>
          )}
        </div>
        <Meter />
      </div>
      <Delay name={name} face="bg-[#505050]" />
    </div>
  );
}

function Headers() {
  return (
    <section className="ml-[2px] w-[344px] shrink-0 bg-[#1e1e1e] text-[#e8e8e8]" aria-label="Tracks">
      <div className="flex h-[52px] flex-col justify-end gap-[2px] pb-1 pl-[3px]">
        <button className="h-[11px] w-[25px] rounded-full bg-[#3c3c3c] text-[10px] leading-[11px] font-medium">Set</button>
        <div className="flex items-center">
          <button aria-label="Previous locator" className="rounded-full bg-[#3c3c3c]"><Icon className="h-[10px] w-[10px]"><path d="M5 6h5" /><path d="M6 3v6L2 6z" fill="currentColor" stroke="none" /></Icon></button>
          <button aria-label="Next locator" className="ml-[5px] rounded-full bg-[#3c3c3c] text-[#8a8a8a]"><Icon className="h-[10px] w-[10px]"><path d="M7 6H2" /><path d="M6 3v6l4-3z" fill="currentColor" stroke="none" /></Icon></button>
          <button aria-label="Automation mode" className="ml-[12px] flex h-[11px] w-5 items-center justify-center bg-[#2fbfdc] text-[#1a1a1a]"><Icon className="h-2 w-2"><path d="M3 9l6-6" /><circle cx="2.500" cy="9.500" r="1.600" fill="currentColor" /><circle cx="9.500" cy="2.500" r="1.600" fill="currentColor" /></Icon></button>
          <button aria-label="Lock envelopes" className="ml-[5px] flex h-[11px] w-5 items-center justify-center bg-[#333333]"><Icon className="h-2 w-2"><path d="M2 5.500h8V11H2z" fill="currentColor" /><path d="M3.500 5.500V4a2.500 2.500 0 015 0v1.500" /></Icon></button>
        </div>
      </div>
      <div>
        {TRACKS.map((t) => <TrackHeader key={t.n} t={t} />)}
        <div className="h-[69px] border-b-2 border-[#2a2a2a] bg-[#505050]" />
        <ReturnHeader name="A Return" letter="A" h="h-[18px]" />
        <ReturnHeader name="B Return" letter="B" h="h-[17px]" />
        <ReturnHeader name="Master" h="h-4" master />
      </div>
    </section>
  );
}

/* ---------- page ---------- */

function RoundButton({ label, children, className = 'text-[#5c5c5c]' }) {
  return (
    <button aria-label={label} className={`flex h-[18px] w-[18px] items-center justify-center rounded-full bg-[#2a2a2a] ${className}`}>
      <Icon>{children}</Icon>
    </button>
  );
}

export default function App() {
  return (
    <div className="flex min-h-screen flex-col bg-[#3d3d3d] font-['Roboto','Liberation_Sans',sans-serif] text-[#e8e8e8]">
      <Transport />

      <main className="flex flex-1">
        <div className="flex w-[29px] shrink-0 flex-col justify-between pl-[7px]">
          <RoundButton label="Show browser"><path d="M.8 1.500h10.400L6 11z" fill="currentColor" stroke="none" /></RoundButton>
          <RoundButton label="Groove pool" className="text-[#454545]"><path d="M1 4.500q2.500-2.500 5 0t5 0M1 8.500q2.500-2.500 5 0t5 0" /></RoundButton>
        </div>

        <div className="min-w-0 flex-1 rounded-l rounded-tr bg-[#1e1e1e] pt-1 pl-[3px]">
          <div className="pr-[5px]"><Overview /></div>
          <div className="mt-[2px] flex pr-[5px]">
            <Timeline />
            <Headers />
          </div>
        </div>

        <div className="flex w-7 shrink-0 flex-col bg-[#3d3d3d]">
          <div className="flex h-[43px] flex-col gap-[3px] pl-[3px]">
            <RoundButton label="Arrangement view" className="text-[#f7981d]"><path d="M1 2.500h10M1 6h10M1 9.500h10" strokeWidth="1.600" /></RoundButton>
            <RoundButton label="Session view"><path d="M2 1v10M6 1v10M10 1v10" strokeWidth="1.600" /></RoundButton>
          </div>
          <div className="flex w-5 flex-1 flex-col items-center justify-end gap-[5px] rounded-r bg-[#1e1e1e] pr-1 pb-[23px]">
            {['I·O', 'R', 'M', 'D'].map((c) => (
              <button key={c} className="h-[13px] w-[13px] rounded-full bg-[#f7981d] text-[7px] leading-[13px] font-bold text-[#1e1e1e]">{c}</button>
            ))}
          </div>
        </div>
      </main>

      <footer className="flex h-[35px] items-center pr-2 pl-[7px]">
        <RoundButton label="Show info"><path d="M2 .8v10.400L11.500 6z" fill="currentColor" stroke="none" /></RoundButton>
        <div className="ml-2 h-5 flex-1 rounded-sm border-2 border-[#2a2a2a] bg-[#505050]" />
        <div className="ml-2 h-5 w-[189px] rounded-sm border-2 border-[#2a2a2a] bg-[#505050]" />
        <button className="ml-2 h-5 w-[62px] rounded-sm bg-[#2a2a2a] text-[10px] font-medium">REFERENCE</button>
        <div className="ml-[7px]"><RoundButton label="Show device view"><path d="M10 .8v10.400L.5 6z" fill="currentColor" stroke="none" /></RoundButton></div>
      </footer>
    </div>
  );
}
